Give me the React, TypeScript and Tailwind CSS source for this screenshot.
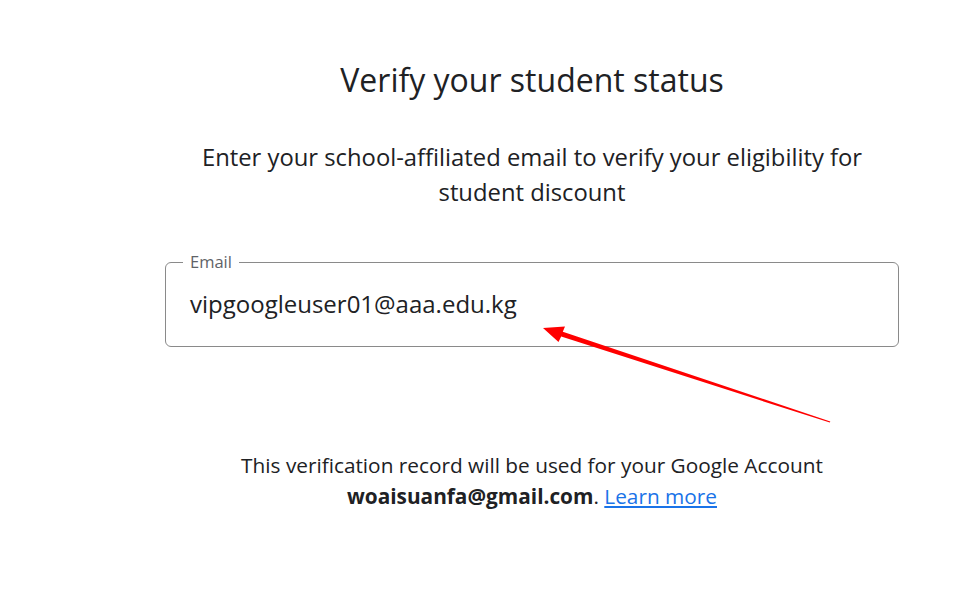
import React from "react";

const RedArrow = () => (
  <svg
    className="absolute left-0 top-0 pointer-events-none"
    width="964"
    height="610"
    viewBox="0 0 964 610"
  >
    <polygon
      points="543,328 565,326.5 562.8,331.8 830.3,421.4 829.8,422.6 561.2,336.6 558.5,342"
      fill="#ff0000"
    />
  </svg>
);

export default function App() {
  return (
    <div
      className="relative w-[964px] h-[610px] bg-white overflow-hidden text-[#202124]"
      style={{ fontFamily: "'Open Sans', Roboto, Arial, sans-serif" }}
    >
      <div className="ml-[165px] w-[734px] flex flex-col items-center">
        <h1 className="mt-[60px] text-[32px] leading-[40px] font-normal">
          Verify your student status
        </h1>
        <p className="mt-[40px] text-[23.8px] leading-[35px] text-center text-[#202124] w-[710px]">
          Enter your school-affiliated email to verify your eligibility for
          student discount
        </p>

        <div className="relative mt-[52px] w-full h-[85px] border border-[#8a8a8a] rounded-[6px]">
          <span className="absolute left-[17px] -top-[11px] bg-white px-[7px] text-[16.5px] leading-[20px] text-[#5f6368]">
            Email
          </span>
          <div className="pl-[24px] pt-[27px] text-[24px] leading-[28px] text-[#202124]">
            vipgoogleuser01@aaa.edu.kg
          </div>
        </div>

        <p className="mt-[103px] text-[20.8px] leading-[31px] text-center text-[#202124]">
          This verification record will be used for your Google Account
          <br />
          <span className="font-bold">woaisuanfa@gmail.com</span>.{" "}
          <a href="#" className="text-[#1a73e8] underline">
            Learn more
          </a>
        </p>
      </div>
      <RedArrow />
    </div>
  );
}
